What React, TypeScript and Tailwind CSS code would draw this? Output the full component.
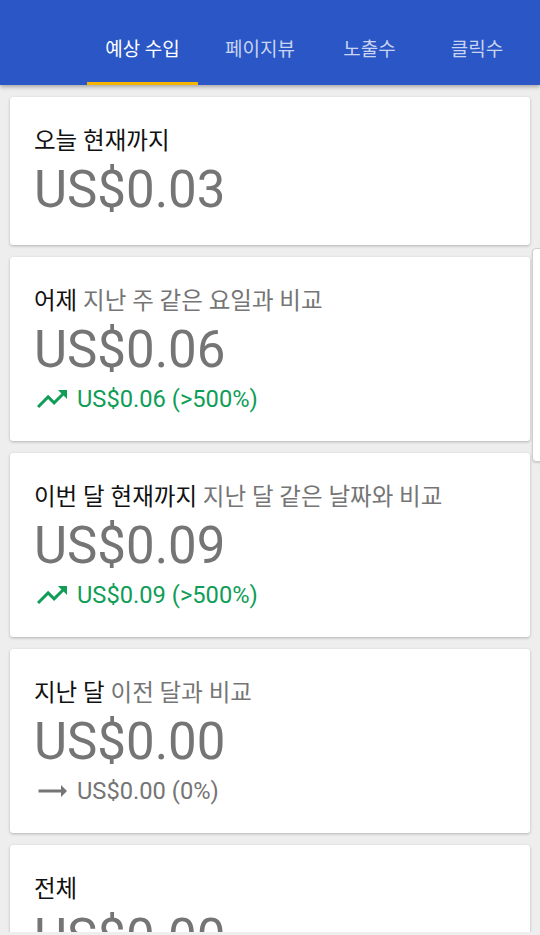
import React from "react";

const TrendUp = () => (
  <svg width="36" height="36" viewBox="0 0 24 24" className="shrink-0">
    <path fill="#0f9d58" d="M16 6l2.29 2.29-4.88 4.88-4-4L2 16.59 3.41 18l6-6 4 4 6.3-6.29L22 12V6z" />
  </svg>
);

const TrendFlat = () => (
  <svg width="36" height="36" viewBox="0 0 24 24" className="shrink-0">
    <path fill="#757575" d="M22 12l-4-4v3H3v2h15v3z" />
  </svg>
);

type CardProps = {
  title: string;
  sub?: string;
  value: string;
  trend?: { kind: "up" | "flat"; text: string };
};

const Card = ({ title, sub, value, trend }: CardProps) => (
  <div className="bg-white rounded-[3px] shadow-[0_1px_3px_rgba(0,0,0,0.25)] px-[24px] pt-[29px] pb-[24px]">
    <div className="text-[23.5px] leading-[30px] mb-[2px] text-[#111111] whitespace-nowrap">
      {title}
      {sub && <span className="text-[#757575]"> {sub}</span>}
    </div>
    <div className="text-[51px] leading-[63px] text-[#757575]">{value}</div>
    {trend && (
      <div className="flex items-center h-[36px]">
        {trend.kind === "up" ? <TrendUp /> : <TrendFlat />}
        <span
          className={
            "ml-[7px] text-[23.7px] leading-[36px] " +
            (trend.kind === "up" ? "text-[#0f9d58]" : "text-[#757575]")
          }
        >
          {trend.text}
        </span>
      </div>
    )}
  </div>
);

export default function App() {
  return (
    <div
      className="relative w-[540px] h-[935px] bg-[#eeeeee] overflow-hidden"
      style={{ fontFamily: 'Roboto, "Noto Sans CJK KR", sans-serif' }}
    >
      <div className="h-[932px] overflow-hidden">
        <div className="relative z-10 h-[85px] bg-[#2a56c6] shadow-[0_2px_4px_rgba(0,0,0,0.3)] flex items-end pl-[87px]">
          <div className="relative w-[111px] h-[85px] flex items-center justify-center pt-[15px] text-[19px] text-white">
            예상 수입
            <div className="absolute left-0 right-0 bottom-0 h-[3px] bg-[#f4b400]" />
          </div>
          <div className="w-[124px] h-[85px] flex items-center justify-center pt-[15px] text-[19px] text-white/75">
            페이지뷰
          </div>
          <div className="w-[95px] h-[85px] flex items-center justify-center pt-[15px] text-[19px] text-white/75">
            노출수
          </div>
          <div className="w-[120px] h-[85px] flex items-center justify-center pt-[15px] text-[19px] text-white/75">
            클릭수
          </div>
        </div>
        <div className="flex flex-col gap-[12px] px-[10px] pt-[12px]">
          <Card title="오늘 현재까지" value="US$0.03" />
          <Card
            title="어제"
            sub="지난 주 같은 요일과 비교"
            value="US$0.06"
            trend={{ kind: "up", text: "US$0.06 (>500%)" }}
          />
          <Card
            title="이번 달 현재까지"
            sub="지난 달 같은 날짜와 비교"
            value="US$0.09"
            trend={{ kind: "up", text: "US$0.09 (>500%)" }}
          />
          <Card
            title="지난 달"
            sub="이전 달과 비교"
            value="US$0.00"
            trend={{ kind: "flat", text: "US$0.00 (0%)" }}
          />
          <Card title="전체" value="US$0.00" />
        </div>
      </div>
      <div className="absolute left-[532px] top-[248px] w-[20px] h-[214px] bg-white rounded-l-[4px] border border-[#cfcfcf] shadow-[0_1px_2px_rgba(0,0,0,0.15)]" />
    </div>
  );
}
